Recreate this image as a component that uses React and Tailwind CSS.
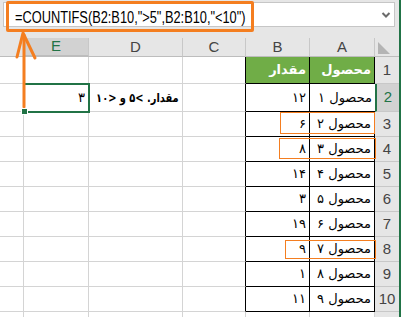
import React from 'react';

// sheet rows: n = row number, a = column A, b = column B
const rows = [
  { n: 1, a: 'محصول', b: 'مقدار', h: 'h-[27px]' },
  { n: 2, a: 'محصول ۱', b: '۱۲', h: 'h-[28px]' },
  { n: 3, a: 'محصول ۲', b: '۶', h: 'h-[25px]' },
  { n: 4, a: 'محصول ۳', b: '۸', h: 'h-[25px]' },
  { n: 5, a: 'محصول ۴', b: '۱۴', h: 'h-[25px]' },
  { n: 6, a: 'محصول ۵', b: '۳', h: 'h-[25px]' },
  { n: 7, a: 'محصول ۶', b: '۱۹', h: 'h-[25px]' },
  { n: 8, a: 'محصول ۷', b: '۹', h: 'h-[25px]' },
  { n: 9, a: 'محصول ۸', b: '۱', h: 'h-[25px]' },
  { n: 10, a: 'محصول ۹', b: '۱۱', h: 'h-[25px]' },
  { n: 11, a: '', b: '', h: 'h-[25px]' },
];

function FormulaBar() {
  return (
    <div className="h-[38px] bg-[#e6e6e6] pt-[2px] pl-[3px] pr-[4px]">
      <div className="h-[25px] bg-white border border-[#c6c6c6] flex items-start justify-between pl-[11px] pr-[3px]">
        <span className="mt-[5px] inline-block origin-left scale-x-[0.8] whitespace-nowrap text-[16px] leading-[20px] text-black font-['Liberation_Sans',sans-serif]">
          =COUNTIFS(B2:B10,"&gt;5",B2:B10,"&lt;10")
        </span>
        <svg width="10" height="8" viewBox="0 0 10 8" className="mt-[8px]">
          <polyline points="1.5,2 5,5.5 8.5,2" fill="none" stroke="#6b6b6b" strokeWidth="2" />
        </svg>
      </div>
    </div>
  );
}

function HeaderRow() {
  const base = "shrink-0 h-[19px] flex items-center justify-center border-r border-[#c8c8c8] border-b border-b-[#bdbdbd] text-[15px] text-[#444] font-['Liberation_Sans',sans-serif]";
  return (
    <div className="flex bg-[#e6e6e6]">
      <div className={`w-[24px] ${base}`} />
      <div className={`w-[65px] ${base} bg-[#d2d2d2] border-b-2 border-b-[#217346] text-[#217346]`}>E</div>
      <div className={`w-[94px] ${base}`}>D</div>
      <div className={`w-[63px] ${base}`}>C</div>
      <div className={`w-[64px] ${base}`}>B</div>
      <div className={`w-[65px] ${base}`}>A</div>
      <div className="w-[24px] shrink-0 h-[19px] border-b border-[#bdbdbd] flex items-end pb-[2px] pl-[3px]">
        <svg width="12" height="12" viewBox="0 0 12 12">
          <polygon points="0,0 0,12 12,12" fill="#b4b4b4" />
        </svg>
      </div>
    </div>
  );
}

function Row({ r }) {
  const inTable = r.n <= 10;
  const head = r.n === 1;
  const sel = r.n === 2;
  const grid = 'border-r border-b border-[#d4d4d4]';
  const text = "text-[13px] text-black font-['DejaVu_Sans',sans-serif]";
  return (
    <div className={`flex ${r.h}`}>
      <div className={`w-[24px] shrink-0 ${grid}`} />
      <div className={`w-[65px] shrink-0 ${grid} flex items-center justify-end pr-[3px] ${text}`}>
        {sel && <span dir="rtl">۳</span>}
      </div>
      <div className={`w-[94px] shrink-0 ${grid} flex items-center justify-end pr-[3px] overflow-hidden`}>
        {sel && (
          <span
            dir="rtl"
            className="inline-block origin-right scale-x-[0.82] whitespace-nowrap text-[12px] font-bold text-black font-['DejaVu_Sans',sans-serif]"
          >
            مقدار. &gt;۵ و &lt;۱۰
          </span>
        )}
      </div>
      <div className={`w-[63px] shrink-0 border-r border-b border-[#d4d4d4] ${inTable ? 'border-r-black' : ''}`} />
      <div
        className={`w-[64px] shrink-0 border-r border-b flex items-center justify-end pr-[3px] ${text} ${
          inTable ? 'border-black' : 'border-[#d4d4d4]'
        } ${head ? 'bg-[#70ad47] text-white font-bold' : ''}`}
      >
        <span dir="rtl">{r.b}</span>
      </div>
      <div
        className={`w-[65px] shrink-0 border-b flex items-center justify-end pr-[3px] ${text} ${
          sel ? '' : 'border-r'
        } ${inTable ? 'border-black' : 'border-[#d4d4d4]'} ${head ? 'bg-[#70ad47] text-white font-bold' : ''}`}
      >
        <span dir="rtl">{r.a}</span>
      </div>
      <div
        className={`w-[24px] shrink-0 border-b border-[#c8c8c8] flex items-center justify-center text-[15px] font-['Liberation_Sans',sans-serif] ${
          sel ? 'bg-[#d2d2d2] text-[#217346] border-l-2 border-l-[#217346]' : 'bg-[#e6e6e6] text-[#444]'
        }`}
      >
        {inTable ? r.n : ''}
      </div>
    </div>
  );
}

export default function App() {
  return (
    <div className="relative w-[401px] h-[317px] overflow-hidden bg-white border-r-2 border-[#217346]">
      <FormulaBar />
      <HeaderRow />
      {rows.map((r) => (
        <Row key={r.n} r={r} />
      ))}

      {/* highlight boxes */}
      <div className="absolute left-[6px] top-[1px] w-[248px] h-[31px] border-[3px] border-[#f47e20] rounded-[2px]" />
      <div className="absolute left-[280px] top-[112px] w-[95px] h-[22px] border-[1.5px] border-[#f47e20]" />
      <div className="absolute left-[279px] top-[138px] w-[97px] h-[21px] border-[1.5px] border-[#f47e20]" />
      <div className="absolute left-[285px] top-[240px] w-[91px] h-[19px] border-[1.5px] border-[#f47e20]" />

      {/* selected cell E2 */}
      <div className="absolute left-[23px] top-[83px] w-[67px] h-[30px] border-2 border-[#217346]" />

      <svg className="absolute left-0 top-0 pointer-events-none" width="401" height="317">
        <line x1="24" y1="107" x2="24" y2="35" stroke="#f47e20" strokeWidth="3" strokeLinecap="round" />
        <polyline points="17,57 23,33 35,58" fill="none" stroke="#f47e20" strokeWidth="3" strokeLinecap="round" strokeLinejoin="round" />
      </svg>

      <div className="absolute left-[21px] top-[108px] w-[7px] h-[7px] bg-[#217346] border border-white" />
    </div>
  );
}
